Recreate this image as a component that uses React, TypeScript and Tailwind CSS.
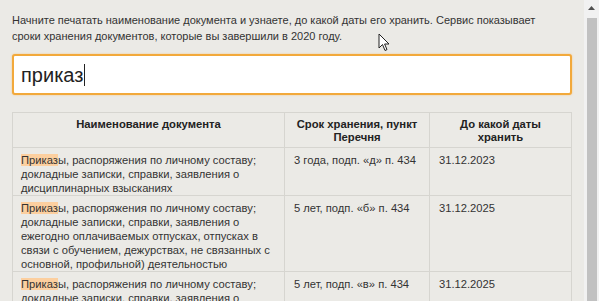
import React from 'react';

type Row = {
  name: string;
  term: string;
  date: string;
};

const rows: Row[] = [
  {
    name: 'ы, распоряжения по личному составу; докладные записки, справки, заявления о дисциплинарных взысканиях',
    term: '3 года, подп. «д» п. 434',
    date: '31.12.2023',
  },
  {
    name: 'ы, распоряжения по личному составу; докладные записки, справки, заявления о ежегодно оплачиваемых отпусках, отпусках в связи с обучением, дежурствах, не связанных с основной, профильной) деятельностью',
    term: '5 лет, подп. «б» п. 434',
    date: '31.12.2025',
  },
  {
    name: 'ы, распоряжения по личному составу; докладные записки, справки, заявления о предоставлении отпусков по уходу за ребенком, отпусков без сохранения заработной платы',
    term: '5 лет, подп. «в» п. 434',
    date: '31.12.2025',
  },
];

export default function App() {
  return (
    <div className="flex h-[301px] w-[599px] overflow-hidden bg-[#ebeae6] font-['Liberation_Sans',Arial,sans-serif] text-[#333]">
      <div className="relative flex-1 px-3 pt-[12px]">
        <p className="text-[11px] leading-[16px]">
          Начните печатать наименование документа и узнаете, до какой даты его хранить. Сервис показывает
          <br />
          сроки хранения документов, которые вы завершили в 2020 году.
        </p>

        <div className="mt-[10px] flex h-[41px] items-center rounded-[3px] border-2 border-[#f2a93b] bg-white px-[7px] shadow-[0_0_2px_#f6c47f]">
          <span className="text-[20px] text-[#222]">приказ</span>
          <span className="ml-[1px] h-[22px] w-px bg-[#222]" />
        </div>

        <table className="mt-[17px] w-full table-fixed border-collapse text-[11.2px] leading-[14px]">
          <colgroup>
            <col className="w-[272px]" />
            <col className="w-[145px]" />
            <col />
          </colgroup>
          <thead>
            <tr className="h-[35px]">
              <th className="border border-[#d6d5d0] px-2 pb-0 pt-[5px] align-top text-[11.25px] font-bold leading-[13px] text-[#222]">
                Наименование документа
              </th>
              <th className="border border-[#d6d5d0] px-[6px] pb-0 pt-[5px] align-top text-[11.25px] font-bold leading-[13px] text-[#222]">
                Срок хранения, пункт Перечня
              </th>
              <th className="border border-[#d6d5d0] px-6 pb-0 pt-[5px] align-top text-[11.25px] font-bold leading-[13px] text-[#222]">
                До какой даты хранить
              </th>
            </tr>
          </thead>
          <tbody>
            {rows.map((row, i) => (
              <tr key={i}>
                <td className="border border-[#d6d5d0] pb-0 pl-2 pr-2 pt-[5px] align-top">
                  <span className="bg-[#fccf9f]">Приказ</span>
                  {row.name}
                </td>
                <td className="border border-[#d6d5d0] px-[9px] pb-0 pt-[5px] align-top">{row.term}</td>
                <td className="border border-[#d6d5d0] px-[9px] pb-0 pt-[5px] align-top">{row.date}</td>
              </tr>
            ))}
          </tbody>
        </table>

        {/* mouse pointer */}
        <svg className="absolute left-[378px] top-[33px]" width="12" height="19" viewBox="0 0 12 19">
          <path d="M1 1 L1 15 L4.5 11.5 L7 17.5 L9 16.6 L6.6 11 L11 11 Z" fill="#fff" stroke="#222" strokeWidth="1" strokeLinejoin="round" />
        </svg>
      </div>

      <div className="flex w-[15px] flex-col items-center bg-[#f1f1f1]">
        <svg className="mt-[6px]" width="7" height="4" viewBox="0 0 7 4">
          <path d="M0 4 L3.5 0 L7 4 Z" fill="#505050" />
        </svg>
        <div className="mt-[8px] w-[10px] flex-1 bg-[#c1c1c1]" />
      </div>
    </div>
  );
}
